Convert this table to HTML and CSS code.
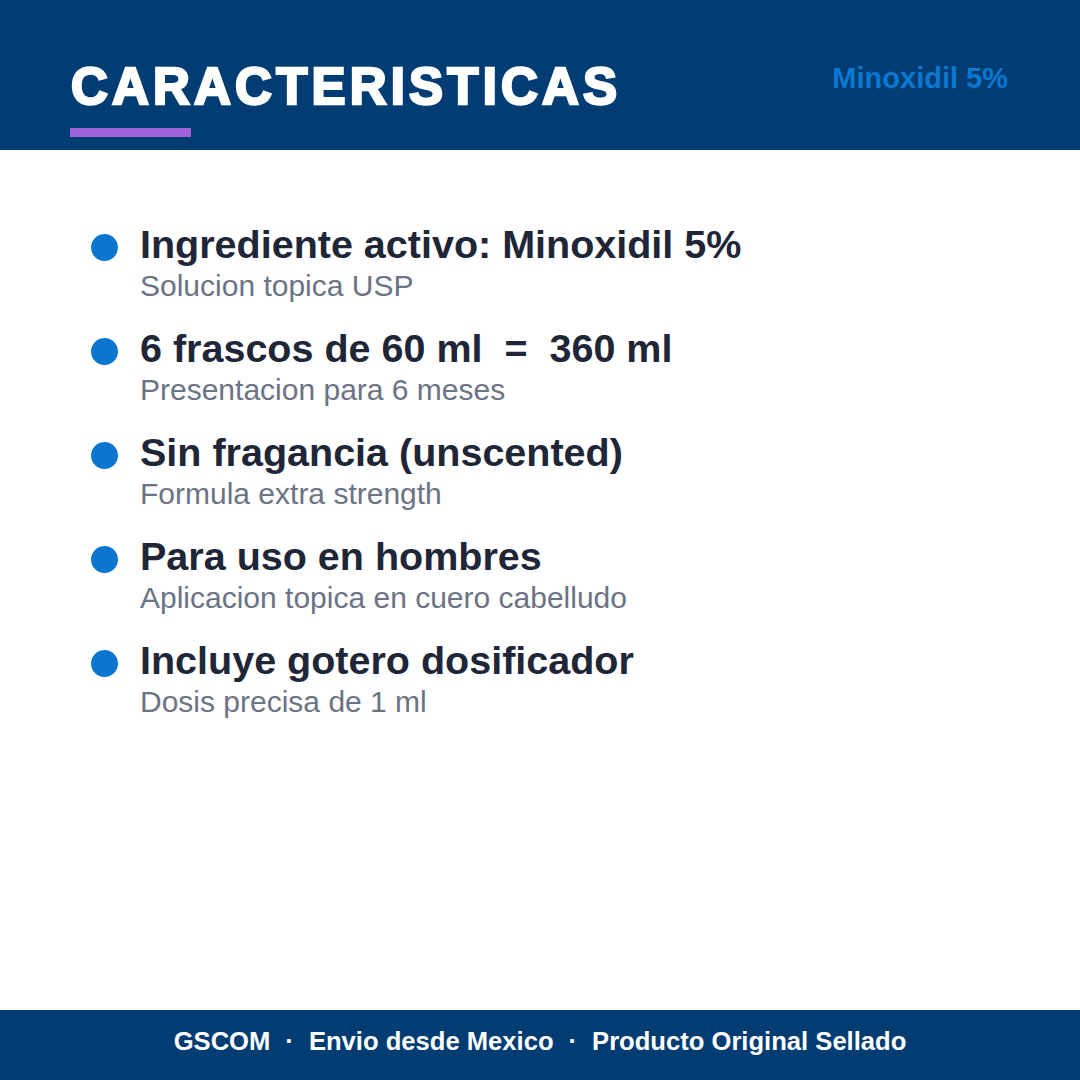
FILE: index.html
```html
<!DOCTYPE html>
<html lang="es">
<head>
<meta charset="utf-8">
<title>Caracteristicas</title>
<link rel="stylesheet" href="styles.css">
</head>
<body>
<div class="page">
  <header class="top">
    <div class="title-block">
      <h1 class="title">CARACTERISTICAS</h1>
      <div class="accent"></div>
    </div>
    <div class="tag">Minoxidil 5%</div>
  </header>
  <main class="content">
    <ul class="features">
      <li class="feature">
        <span class="dot"></span>
        <div class="text">
          <div class="head">Ingrediente activo: Minoxidil 5%</div>
          <div class="sub">Solucion topica USP</div>
        </div>
      </li>
      <li class="feature">
        <span class="dot"></span>
        <div class="text">
          <div class="head">6 frascos de 60 ml&nbsp; = &nbsp;360 ml</div>
          <div class="sub">Presentacion para 6 meses</div>
        </div>
      </li>
      <li class="feature">
        <span class="dot"></span>
        <div class="text">
          <div class="head">Sin fragancia (unscented)</div>
          <div class="sub">Formula extra strength</div>
        </div>
      </li>
      <li class="feature">
        <span class="dot"></span>
        <div class="text">
          <div class="head">Para uso en hombres</div>
          <div class="sub">Aplicacion topica en cuero cabelludo</div>
        </div>
      </li>
      <li class="feature">
        <span class="dot"></span>
        <div class="text">
          <div class="head">Incluye gotero dosificador</div>
          <div class="sub">Dosis precisa de 1 ml</div>
        </div>
      </li>
    </ul>
  </main>
  <footer class="bottom">
    <span>GSCOM</span>
    <span class="sep">·</span>
    <span>Envio desde Mexico</span>
    <span class="sep">·</span>
    <span>Producto Original Sellado</span>
  </footer>
</div>
</body>
</html>
```
FILE: styles.css
```css
* { box-sizing: border-box; }
html, body { margin: 0; padding: 0; }
body {
  width: 1080px;
  height: 1080px;
  background: #ffffff;
  font-family: "Liberation Sans", Arial, sans-serif;
}
.page {
  width: 1080px;
  height: 1080px;
  display: flex;
  flex-direction: column;
}
.top {
  height: 150px;
  flex: 0 0 150px;
  background: #013c73;
  display: flex;
  justify-content: space-between;
  align-items: flex-start;
  padding: 0 72px 0 70px;
}
.title-block {
  padding-top: 57px;
}
.title {
  margin: 0 0 0 1px;
  font-size: 51px;
  line-height: 60px;
  font-weight: 700;
  color: #ffffff;
  letter-spacing: 4.2px;
  -webkit-text-stroke: 2.5px #ffffff;
}
.accent {
  margin-top: 11px;
  width: 121px;
  height: 9px;
  background: #a062d8;
}
.tag {
  margin-top: 61px;
  font-size: 29px;
  line-height: 34px;
  font-weight: 700;
  color: #0b78d2;
}
.content {
  flex: 1;
  padding: 71px 0 0 91px;
}
.features {
  list-style: none;
  margin: 0;
  padding: 0;
  display: flex;
  flex-direction: column;
  gap: 21px;
}
.feature {
  display: flex;
  align-items: flex-start;
  gap: 22px;
}
.dot {
  flex: 0 0 27px;
  width: 27px;
  height: 27px;
  border-radius: 50%;
  background: #0b76cf;
  margin-top: 13px;
}
.text {
  display: flex;
  flex-direction: column;
  gap: 1px;
}
.head {
  font-size: 39.5px;
  line-height: 46px;
  font-weight: 700;
  color: #1f2637;
}
.sub {
  font-size: 30px;
  line-height: 36px;
  color: #6b7384;
}
.bottom {
  height: 70px;
  flex: 0 0 70px;
  background: #013c73;
  display: flex;
  justify-content: center;
  align-items: flex-start;
  gap: 15px;
  padding-top: 16px;
  font-size: 25.6px;
  line-height: 30px;
  font-weight: 700;
  color: #ffffff;
}
```
